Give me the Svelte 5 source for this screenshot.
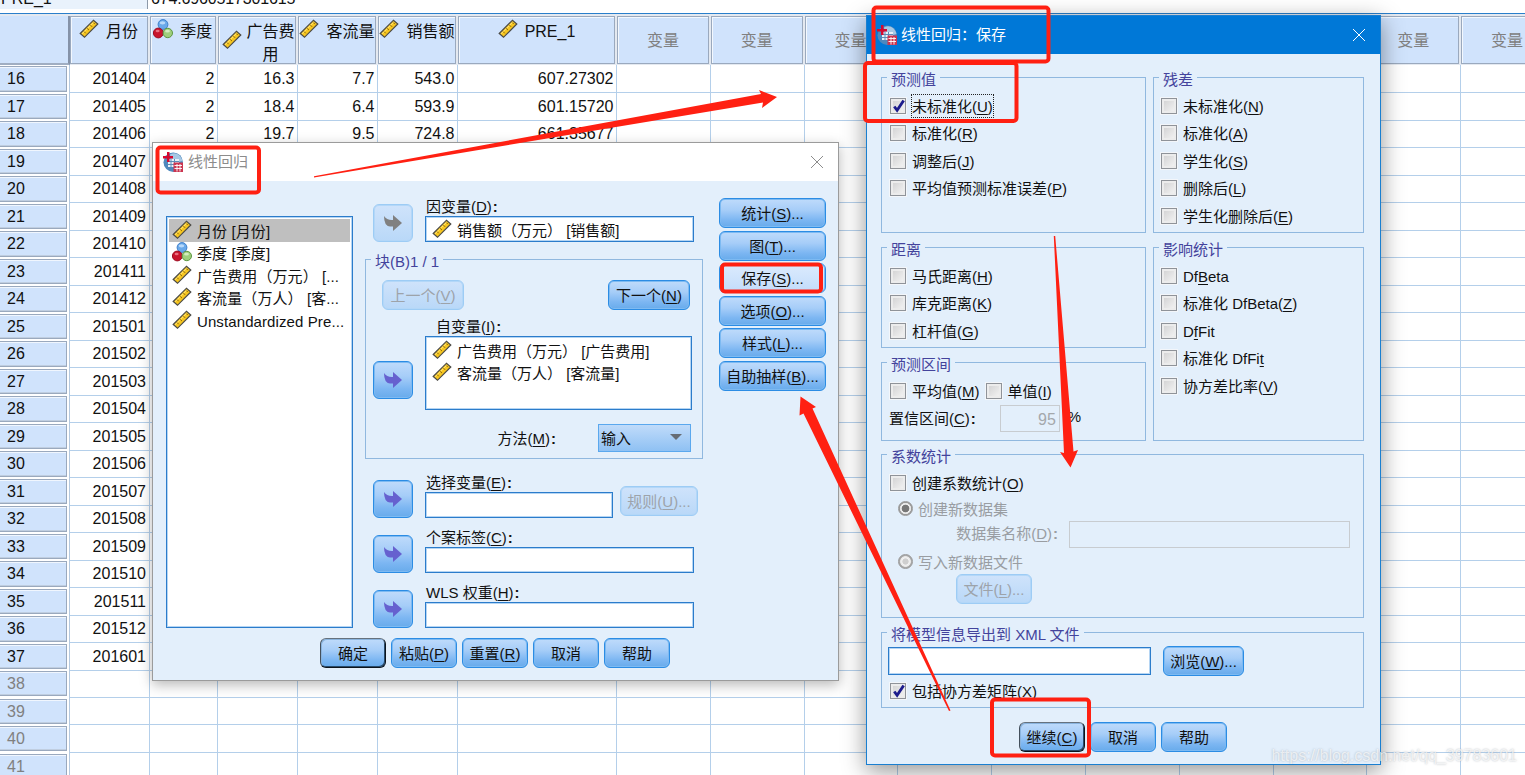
<script>
    const columns = [
        { label: '月份', icon: 'scale' },
        { label: '季度', icon: 'nominal' },
        { label: '广告费用', icon: 'scale', wrap: true },
        { label: '客流量', icon: 'scale' },
        { label: '销售额', icon: 'scale' },
        { label: 'PRE_1', icon: 'scale' },
    ];
    const emptyColumns = Array(10).fill('变量');

    const known = {
        16: ['2', '16.3', '7.7', '543.0', '607.27302'],
        17: ['2', '18.4', '6.4', '593.9', '601.15720'],
        18: ['2', '19.7', '9.5', '724.8', '661.35677'],
    };

    // rows 16-37 hold months from 2014-04 on, the rest are blank
    const rows = Array.from({ length: 26 }, (_, i) => {
        const n = i + 16;
        const m = i + 3;
        const month = n <= 37 ? String(201401 + Math.floor(m / 12) * 100 + (m % 12)) : '';
        return { n, cells: [month, ...(known[n] || ['', '', '', '', ''])] };
    });

    const variables = [
        { label: '月份 [月份]', icon: 'scale' },
        { label: '季度 [季度]', icon: 'nominal' },
        { label: '广告费用（万元） [...', icon: 'scale' },
        { label: '客流量（万人） [客...', icon: 'scale' },
        { label: 'Unstandardized Pre...', icon: 'scale' },
    ];
    let selected = $state(0);

    // "&" marks the mnemonic letter
    const sideButtons = ['统计(&S)...', '图(&T)...', '保存(&S)...', '选项(&O)...', '样式(&L)...', '自助抽样(&B)...'];
    const footerButtons = ['确定', '粘贴(&P)', '重置(&R)', '取消', '帮助'];
    const predicted = ['未标准化(&U)', '标准化(&R)', '调整后(&J)', '平均值预测标准误差(&P)'];
    const residuals = ['未标准化(&N)', '标准化(&A)', '学生化(&S)', '删除后(&L)', '学生化删除后(&E)'];
    const distances = ['马氏距离(&H)', '库克距离(&K)', '杠杆值(&G)'];
    const influence = ['Df&Beta', '标准化 DfBeta(&Z)', 'D&fFit', '标准化 DfFi&t', '协方差比率(&V)'];
</script>

{#snippet mn(text)}{@const i = text.indexOf('&')}{#if i < 0}{text}{:else}{text.slice(0, i)}<u>{text[i + 1]}</u>{text.slice(i + 2)}{/if}{/snippet}

{#snippet varIcon(kind)}
    {#if kind === 'scale'}
        <svg class="var-icon" viewBox="0 0 20 20">
            <path d="M1.200 14.500 14.500 1.200 18.800 5 5.500 18.300Z" fill="#f7c61f" stroke="#4a4a48" stroke-width="1.200" />
            <path d="M3 14.800 15 2.900" stroke="#ffe680" stroke-width="1" />
            <path d="m5 12.500 1.800 1.800M8.200 9.300l1.800 1.800M11.400 6.100l1.800 1.800M14.300 3.500l1.600 1.600" stroke="#8a6a10" stroke-width="1" />
        </svg>
    {:else}
        <svg class="var-icon" viewBox="0 0 20 20">
            <circle cx="10" cy="5.500" r="4.900" fill="#6aa9ea" stroke="#3f7fca" />
            <circle cx="5.300" cy="14" r="4.900" fill="#c8152d" stroke="#9d0d22" />
            <circle cx="14.800" cy="14" r="4.700" fill="#9fcf7c" stroke="#5c9642" />
            <ellipse cx="9.500" cy="3.800" rx="2.800" ry="1.600" fill="#b8d9fa" />
            <ellipse cx="4.600" cy="12" rx="2" ry="1.300" fill="#ea7080" />
            <ellipse cx="14.500" cy="12.200" rx="2.400" ry="1.400" fill="#d4edc0" />
        </svg>
    {/if}
{/snippet}

{#snippet appIcon()}
    <svg class="app-icon" viewBox="0 0 20 20">
        <circle cx="10.200" cy="10.200" r="9.700" fill="#4f88bd" />
        <path d="M7 2.500c5-3 11 0 12.500 6.500L8 12Z" fill="#a6c8e4" />
        <path d="M5 7h11v8H5z" fill="#e8f1fa" />
        <path d="M5 9.500h11M5 12.500h11M8 7v8M11.500 7v8" stroke="#5e8cb8" />
        <path d="M4 0h2.500v4H10v2.500H6.500V10H4V6.500H0V4h4z" fill="#d5082f" />
        <path d="M10.500 10.500H20V20h-9.500z" fill="#cb3550" />
        <path d="M11.500 13.500H19M11.500 16.500H19M14 12v7.500M17 12v7.500" stroke="#fff" stroke-width=".9" />
    </svg>
{/snippet}

{#snippet closeIcon()}
    <svg class="close" viewBox="0 0 14 14">
        <path d="M1 1 13 13M13 1 1 13" stroke="currentColor" fill="none" />
    </svg>
{/snippet}

{#snippet transfer(disabled)}
    <button class="btn transfer" {disabled} aria-label="move">
        <svg viewBox="0 0 18 16">
            <path d="M0 1Q3 5.500 9 5V0l9 8-9 8v-4.500H6Q0 11 0 1Z" fill="currentColor" />
        </svg>
    </button>
{/snippet}

{#snippet check(text, checked = false, focused = false)}
    <label class="check">
        <span class="box">
            {#if checked}
                <svg viewBox="0 0 16 16"><path d="M3.500 8 6.500 12 13.500 1.500" fill="none" stroke="#1c1c8c" stroke-width="3" /></svg>
            {/if}
        </span>
        <span class="check-text" class:focused>{@render mn(text)}</span>
    </label>
{/snippet}

<div class="screen">
    <div class="formula">
        <span class="cell-name">PRE_1</span>
        <span class="cell-value">674.6960517301615</span>
    </div>

    <div class="sheet">
        <div class="row head">
            <div class="corner"></div>
            {#each columns as col}
                <div class="col-head" class:wrap={col.wrap}>
                    {@render varIcon(col.icon)}
                    <span>{col.label}</span>
                </div>
            {/each}
            {#each emptyColumns as label}
                <div class="col-head unused">{label}</div>
            {/each}
        </div>
        {#each rows as row}
            <div class="row">
                <div class="row-head"><span class:unused={row.n > 37}>{row.n}</span></div>
                {#each row.cells as cell}
                    <div class="cell">{cell}</div>
                {/each}
                {#each emptyColumns as _}
                    <div class="cell"></div>
                {/each}
            </div>
        {/each}
    </div>

    <section class="dialog regression">
        <header>
            {@render appIcon()}
            <h1>线性回归</h1>
            {@render closeIcon()}
        </header>
        <div class="main">
            <ul class="listbox source">
                {#each variables as v, i}
                    <li class:selected={i === selected}>
                        <button class="item" onclick={() => (selected = i)}>{@render varIcon(v.icon)}<span>{v.label}</span></button>
                    </li>
                {/each}
            </ul>

            <div class="middle">
                <div class="field-row first">
                    {@render transfer(true)}
                    <div class="field">
                        <span class="caption">{@render mn('因变量(&D)')}<b>:</b></span>
                        <div class="input filled"><div class="item">{@render varIcon('scale')}<span>销售额（万元） [销售额]</span></div></div>
                    </div>
                </div>

                <fieldset class="block">
                    <legend>块(B)1 / 1</legend>
                    <div class="nav">
                        <button class="btn" disabled>{@render mn('上一个(&V)')}</button>
                        <button class="btn">{@render mn('下一个(&N)')}</button>
                    </div>
                    <span class="caption indep">{@render mn('自变量(&I)')}<b>:</b></span>
                    <div class="indep-row">
                        {@render transfer(false)}
                        <ul class="listbox">
                            <li><div class="item">{@render varIcon('scale')}<span>广告费用（万元） [广告费用]</span></div></li>
                            <li><div class="item">{@render varIcon('scale')}<span>客流量（万人） [客流量]</span></div></li>
                        </ul>
                    </div>
                    <div class="method">
                        <span>{@render mn('方法(&M)')}<b>:</b></span>
                        <div class="select">输入<i></i></div>
                    </div>
                </fieldset>

                <div class="field-row rule">
                    {@render transfer(false)}
                    <div class="field">
                        <span class="caption">{@render mn('选择变量(&E)')}<b>:</b></span>
                        <div class="input"></div>
                    </div>
                    <button class="btn" disabled>{@render mn('规则(&U)...')}</button>
                </div>
                <div class="field-row">
                    {@render transfer(false)}
                    <div class="field">
                        <span class="caption">{@render mn('个案标签(&C)')}<b>:</b></span>
                        <div class="input"></div>
                    </div>
                </div>
                <div class="field-row">
                    {@render transfer(false)}
                    <div class="field">
                        <span class="caption">{@render mn('WLS 权重(&H)')}<b>:</b></span>
                        <div class="input"></div>
                    </div>
                </div>
            </div>

            <div class="side">
                {#each sideButtons as label, i}
                    <button class="btn" class:hot={i === 2}>{@render mn(label)}</button>
                {/each}
            </div>
        </div>
        <footer>
            {#each footerButtons as label, i}
                <button class="btn" class:default={i === 0}>{@render mn(label)}</button>
            {/each}
        </footer>
    </section>

    <section class="dialog save">
        <header>
            {@render appIcon()}
            <h1>线性回归：保存</h1>
            {@render closeIcon()}
        </header>
        <div class="groups">
            <div class="col">
                <fieldset class="g-pred">
                    <legend>预测值</legend>
                    {#each predicted as label, i}
                        {@render check(label, i === 0, i === 0)}
                    {/each}
                </fieldset>
                <fieldset class="g-dist">
                    <legend>距离</legend>
                    {#each distances as label}
                        {@render check(label)}
                    {/each}
                </fieldset>
                <fieldset class="g-int">
                    <legend>预测区间</legend>
                    <div class="inline">
                        {@render check('平均值(&M)')}
                        {@render check('单值(&I)')}
                    </div>
                    <div class="ci">
                        <span>{@render mn('置信区间(&C)')}<b>:</b></span>
                        <div class="input off">95</div>
                        <span class="pct">%</span>
                    </div>
                </fieldset>
            </div>
            <div class="col">
                <fieldset class="g-pred">
                    <legend>残差</legend>
                    {#each residuals as label}
                        {@render check(label)}
                    {/each}
                </fieldset>
                <fieldset class="g-infl">
                    <legend>影响统计</legend>
                    {#each influence as label}
                        {@render check(label)}
                    {/each}
                </fieldset>
            </div>
        </div>
        <fieldset class="g-coef">
            <legend>系数统计</legend>
            {@render check('创建系数统计(&O)')}
            <div class="radio on"><i></i><span>创建新数据集</span></div>
            <div class="dataset">
                <span>{@render mn('数据集名称(&D)')}<b>:</b></span>
                <div class="input off"></div>
            </div>
            <div class="radio"><i></i><span>写入新数据文件</span></div>
            <button class="btn file" disabled>{@render mn('文件(&L)...')}</button>
        </fieldset>
        <fieldset class="g-xml">
            <legend>将模型信息导出到 XML 文件</legend>
            <div class="browse">
                <div class="input"></div>
                <button class="btn">{@render mn('浏览(&W)...')}</button>
            </div>
            {@render check('包括协方差矩阵(&X)', true)}
        </fieldset>
        <footer>
            <button class="btn default">{@render mn('继续(&C)')}</button>
            <button class="btn">取消</button>
            <button class="btn">帮助</button>
        </footer>
    </section>

    <svg class="marks" viewBox="0 0 1525 775">
        <g fill="none" stroke="#ff2012" stroke-width="4">
            <rect x="157.500" y="147.500" width="101.500" height="45" rx="3" />
            <rect x="722" y="264.500" width="99" height="27" rx="3" />
            <rect x="873.500" y="7.500" width="175" height="54" rx="3" />
            <rect x="865" y="63" width="151.500" height="58" rx="3" />
            <rect x="992" y="699.500" width="97" height="56" rx="3" />
        </g>
        <g fill="#ff2012">
            <path d="M314 176.200 761 94 759 90 777 97 762 108 763 102.500 314 177.500Z" />
            <path d="M1053.800 236 1064 453 1060 452 1070.500 467.500 1078 450 1073.500 451.500 1055.200 236Z" />
            <path d="M950.500 710.500 812.500 408.500 816 407 800.500 396.500 799.500 415.500 803.500 413.500 949 711Z" />
        </g>
    </svg>
    <div class="watermark">https://blog.csdn.net/qq_39783601</div>
</div>

<style>
    :global(body) {
        margin: 0;
        overflow: hidden;
    }

    .screen {
        position: relative;
        width: 1525px;
        height: 775px;
        overflow: hidden;
        background: #fff;
        font-family: "Liberation Sans", "Noto Sans CJK SC", sans-serif;
        font-size: 15px;
        line-height: 20px;
        color: #111;
    }

    .screen * {
        box-sizing: border-box;
    }

    .formula {
        display: flex;
        height: 13px;
        overflow: hidden;
        font-size: 16px;
    }

    .formula span {
        height: 21px;
        margin-top: -12px;
        line-height: 21px;
    }

    .cell-name {
        width: 148px;
        padding-left: 1px;
        background: #e9f2fc;
        border-right: 1px solid #8d99a8;
    }

    .cell-value {
        padding-left: 3px;
        letter-spacing: -.15px;
    }

    .sheet {
        border-top: 1px solid #2a7fcb;
        font-size: 16px;
    }

    .row {
        display: grid;
        grid-template-columns: 69.500px 80px 68.500px 80px 80px 80px 159px repeat(10, 93.800px);
        height: 27.500px;
    }

    .row.head {
        height: 51px;
        padding-top: 2px;
        background: #e4e9f0;
    }

    .corner {
        background: #d0e3fc;
        border-right: 2px solid #8492a8;
        border-bottom: 2px solid #a0aec2;
    }

    .col-head {
        display: flex;
        justify-content: center;
        gap: 7px;
        height: 48px;
        margin: 0 2px 0 0;
        padding-top: 5px;
        background: #d0e3fc;
        border: 1px solid #9aa9be;
        box-shadow: inset 1px 1px #f3f8fe;
        white-space: nowrap;
    }

    .col-head .var-icon {
        margin-top: -3px;
    }

    .col-head.wrap {
        gap: 5px;
        padding-left: 2px;
    }

    .col-head.wrap span {
        width: 48px;
        white-space: normal;
        text-align: center;
        line-height: 23px;
        margin-top: -2px;
    }

    .col-head.wrap .var-icon {
        margin-top: 8px;
    }

    .unused {
        color: #808080;
    }

    .col-head.unused {
        padding-top: 14px;
    }

    .row-head {
        padding: 1px 2px 1.500px 0;
        border-right: 1px solid #b4c9e0;
    }

    .row-head span {
        display: block;
        height: 100%;
        padding-left: 7px;
        line-height: 23px;
        background: #d0e3fc;
        border: 1px solid #9aa9be;
        border-left: 0;
        box-shadow: inset 0 1px #f0f6fe, inset 0 -1px #c0cee0;
    }

    .cell {
        padding-right: 2.500px;
        line-height: 27px;
        text-align: right;
        border-right: 1px solid #b4cfea;
        border-bottom: 1px solid #b4cfea;
    }

    .var-icon {
        flex: none;
        width: 20px;
        height: 20px;
    }

    .dialog {
        position: absolute;
        background: #e3effb;
    }

    .dialog.regression {
        left: 152px;
        top: 142px;
        width: 687px;
        height: 539px;
        border: 1px solid #9b9b9b;
        box-shadow: 0 4px 12px rgba(0, 0, 0, .28);
    }

    .dialog.save {
        left: 866px;
        top: 15px;
        width: 515px;
        height: 750px;
        border: 1px solid #1a7fd0;
        box-shadow: 0 6px 22px rgba(0, 0, 0, .42);
    }

    header {
        display: flex;
        align-items: center;
        height: 38px;
        padding: 0 14px 0 10px;
        background: #fff;
        color: #8c8c8c;
    }

    .save header {
        background: #0078d7;
        color: #fff;
    }

    .app-icon {
        width: 20px;
        height: 20px;
        margin-right: 5px;
    }

    .save .app-icon {
        margin-right: 4px;
    }

    h1 {
        flex: 1;
        margin: 0;
        font-size: 15px;
        font-weight: 400;
    }

    .close {
        width: 14px;
        height: 14px;
    }

    .main {
        display: flex;
    }

    ul {
        margin: 0;
        padding: 0;
        list-style: none;
    }

    .listbox {
        padding: 2px;
        background: #fff;
        border: 1px solid #2b7ccb;
        box-shadow: inset 0 0 0 1px #b5d5f3;
    }

    .listbox li {
        height: 22.500px;
    }

    .source {
        width: 187px;
        height: 412px;
        margin: 35px 0 0 13px;
    }

    .selected {
        background: #bfbfbf;
    }

    .item {
        display: flex;
        align-items: center;
        gap: 5px;
        width: 100%;
        height: 22px;
        padding: 0 0 0 3px;
        border: 0;
        background: none;
        font: inherit;
        color: inherit;
        white-space: nowrap;
    }

    .item .var-icon {
        margin-top: -1px;
    }

    .item span {
        padding-top: 3px;
    }

    .source span {
        letter-spacing: .1px;
    }

    .middle {
        width: 338px;
        margin-left: 12px;
    }

    .field-row {
        display: flex;
        align-items: flex-end;
        height: 55px;
        padding-left: 8px;
    }

    .field-row.first {
        height: 61px;
    }

    .field-row.rule {
        height: 59px;
    }

    .field {
        width: 269px;
        margin-left: 12px;
    }

    .rule .field {
        width: 188px;
    }

    .rule > .btn:last-child {
        width: 78px;
        margin: 0 0 2px 7px;
    }

    .caption {
        display: block;
        height: 20px;
        padding: 1px 0 0 1px;
    }

    b {
        margin-left: 1px;
    }

    u {
        text-underline-offset: 2px;
        text-decoration-thickness: 1px;
    }

    .input {
        height: 26px;
        background: #fff;
        border: 1px solid #2b7ccb;
        box-shadow: inset 0 0 0 1px #b5d5f3;
    }

    .input .item {
        height: 24px;
        padding-left: 6px;
    }

    .input.off {
        background: none;
        border-color: #c8ccd0;
        box-shadow: none;
        color: #a4a8ac;
    }

    .btn {
        height: 30px;
        padding: 2px 0 0;
        border: 1px solid #2b8ce4;
        border-radius: 6px;
        background: linear-gradient(#bfdbfb, #a6cdf8 40%, #7cb6f2 75%, #68abeb);
        box-shadow: inset 0 0 0 1px #7dbaf2;
        font: inherit;
        color: #111;
        white-space: nowrap;
    }

    .btn:disabled {
        border-color: #9dccf5;
        background: linear-gradient(#cfe3fb, #b9d8f8);
        box-shadow: inset 0 0 0 1px #b3d7f8;
        color: #9da3aa;
    }

    .btn.hot {
        background: linear-gradient(#dcebfd, #c2dcfb);
    }

    .btn.default {
        border-color: #66727e #0d141c #0d141c #44505c;
        box-shadow: inset 1px 1px #8ab4de, inset -1px -1px #284a6a;
    }

    .btn.transfer {
        display: flex;
        align-items: center;
        justify-content: center;
        flex: none;
        width: 40px;
        height: 38px;
        padding: 0;
        color: #6661cf;
    }

    .btn.transfer:disabled {
        color: #808080;
    }

    .transfer svg {
        width: 18px;
        height: 16px;
    }

    fieldset {
        min-width: 0;
        margin: 0;
        padding: 0;
        border: 1px solid #90b8df;
        box-shadow: none;
    }

    legend {
        height: 21px;
        margin-left: 5px;
        padding: 3px 4px 0;
        line-height: 20px;
        color: #43439c;
    }

    .block {
        height: 210px;
        margin-top: 7px;
    }

    .nav {
        display: flex;
        justify-content: space-between;
        padding: 10px 12px 0 16px;
    }

    .nav .btn {
        width: 82px;
    }

    .indep {
        margin: 6px 0 0 69px;
    }

    .indep-row {
        display: flex;
        gap: 12px;
        padding-left: 7px;
    }

    .indep-row .transfer {
        margin-top: 25px;
    }

    .indep-row .listbox {
        width: 267px;
        height: 74px;
    }

    .indep-row .item {
        padding-left: 4px;
    }

    .method {
        display: flex;
        justify-content: flex-end;
        align-items: center;
        gap: 42px;
        margin-top: 14px;
        padding-right: 11px;
    }

    .method > span {
        padding-top: 2px;
    }

    .select {
        display: flex;
        justify-content: space-between;
        align-items: center;
        width: 93px;
        height: 28px;
        padding: 1px 8px 0 2px;
        border: 1px solid #5aa8ee;
        background: linear-gradient(#c0dbfa, #8fc1f3);
    }

    .select i {
        margin-top: -4px;
        border: 6px solid transparent;
        border-top-color: #666c74;
        border-bottom: 0;
    }

    .side {
        display: flex;
        flex-direction: column;
        gap: 2.500px;
        margin: 17px 0 0 16px;
    }

    .side .btn {
        width: 107px;
    }

    footer {
        display: flex;
        gap: 5px;
    }

    footer .btn {
        width: 66px;
    }

    .regression footer {
        margin: 10px 0 0 167px;
    }

    .groups {
        display: flex;
        gap: 7px;
        padding: 13px 0 0 14px;
    }

    .col {
        display: flex;
        flex-direction: column;
        gap: 4px;
        width: 265px;
    }

    .col + .col {
        width: 211px;
    }

    .g-pred {
        height: 166px;
    }

    .g-dist {
        height: 111px;
    }

    .g-int {
        height: 89px;
    }

    .g-infl {
        height: 204px;
    }

    .check {
        display: flex;
        align-items: center;
        gap: 5px;
        height: 27.500px;
        padding-left: 8px;
        white-space: nowrap;
    }

    .col + .col .check {
        padding-left: 7px;
    }

    legend + .check {
        margin-top: 4px;
    }

    .box {
        flex: none;
        width: 16px;
        height: 16px;
        border: 1px solid #8f9399;
        background: linear-gradient(135deg, #cfcfd0, #f6f6f6);
        box-shadow: inset 0 0 0 2px #ececec, 0 0 0 1px #f3f6fa;
    }

    .box svg {
        display: block;
        width: 15px;
        height: 15px;
    }

    .check-text {
        padding: 2px 0 0;
        border: 1px solid transparent;
    }

    .check-text.focused {
        border: 1px dotted #222;
    }

    .inline {
        display: flex;
        margin-top: 4px;
    }

    .inline .check + .check {
        padding-left: 5px;
    }

    .ci {
        display: flex;
        align-items: center;
        height: 27px;
        padding-left: 7px;
    }

    .ci > span:first-child {
        padding-top: 1px;
    }

    .ci .input {
        width: 60px;
        height: 27px;
        margin: 0 8px 0 24px;
        padding: 4px 3px 0 0;
        text-align: right;
        font-size: 16px;
    }

    .pct {
        margin-top: -3px;
    }

    .g-coef {
        width: 483px;
        height: 174px;
        margin: 3px 0 0 14px;
        color: #999da2;
    }

    .g-coef .check {
        color: #111;
    }

    .radio {
        display: flex;
        align-items: center;
        gap: 5px;
        height: 24px;
        padding-left: 16px;
    }

    .radio span {
        padding-top: 3px;
    }

    .radio i {
        width: 15px;
        height: 15px;
        border: 1px solid #999;
        border-radius: 50%;
        background: radial-gradient(#cfcfcf 30%, #f4f4f4 38%, #e6e6e6 55%, #aaa 62%);
    }

    .radio.on i {
        background: radial-gradient(#777 38%, #f4f4f4 46%, #e2e2e2 58%, #999 64%);
    }

    .dataset {
        display: flex;
        align-items: center;
        justify-content: flex-end;
        gap: 11px;
        margin-bottom: 2px;
        padding-right: 13px;
    }

    .dataset .input {
        width: 281px;
        height: 27px;
    }

    .file {
        display: block;
        width: 76px;
        margin-left: 74px;
    }

    .g-xml {
        width: 483px;
        height: 86px;
        margin: 4px 0 0 14px;
    }

    .browse {
        display: flex;
        align-items: center;
        gap: 12px;
        height: 30px;
        margin: 3px 0 1px;
        padding-left: 6px;
    }

    .browse .input {
        width: 263px;
        height: 28px;
    }

    .browse .btn {
        width: 81px;
    }

    .save footer {
        margin: 14px 0 0 152px;
    }

    .marks {
        position: absolute;
        inset: 0;
        width: 1525px;
        height: 775px;
        pointer-events: none;
    }

    .watermark {
        position: absolute;
        right: 8px;
        bottom: 9px;
        font-size: 16px;
        color: rgba(255, 255, 255, .7);
        text-shadow: 0 0 2px rgba(120, 130, 140, .55);
    }
</style>
